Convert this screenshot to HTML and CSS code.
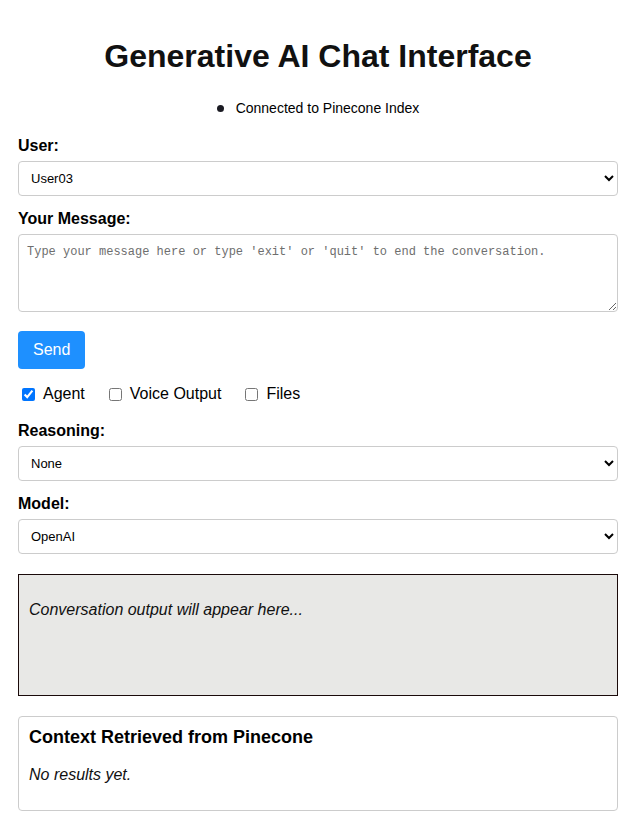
FILE: index.html
```html
<!DOCTYPE html>
<html lang="en">
<head>
<meta charset="utf-8">
<title>Generative AI Chat Interface</title>
<link rel="stylesheet" href="styles.css">
</head>
<body>
<div class="container">
  <h1 class="title">Generative AI Chat Interface</h1>
  <div class="status"><span class="dot"></span><span>Connected to Pinecone Index</span></div>

  <label class="field-label" for="user">User:</label>
  <select id="user" class="select"><option>User03</option></select>

  <label class="field-label" for="msg">Your Message:</label>
  <textarea id="msg" class="message" placeholder="Type your message here or type 'exit' or 'quit' to end the conversation."></textarea>

  <button class="send">Send</button>

  <div class="options">
    <label class="opt"><input type="checkbox" checked>Agent</label>
    <label class="opt"><input type="checkbox">Voice Output</label>
    <label class="opt"><input type="checkbox">Files</label>
  </div>

  <label class="field-label" for="reasoning">Reasoning:</label>
  <select id="reasoning" class="select"><option>None</option></select>

  <label class="field-label" for="model">Model:</label>
  <select id="model" class="select"><option>OpenAI</option></select>

  <div class="output"><p class="muted">Conversation output will appear here...</p></div>

  <div class="context">
    <h3 class="context-title">Context Retrieved from Pinecone</h3>
    <p class="muted">No results yet.</p>
  </div>
</div>
</body>
</html>
```
FILE: styles.css
```css
html, body {
  margin: 0;
  padding: 0;
  background: #fff;
}
body {
  font-family: "Liberation Sans", Arial, sans-serif;
  color: #000;
}
.container {
  width: 600px;
  margin: 0 18px;
  padding-top: 38px;
  display: flex;
  flex-direction: column;
}
.title {
  margin: 0;
  font-size: 32px;
  line-height: 37px;
  text-align: center;
  font-weight: bold;
  color: #111;
}
.status {
  margin-top: 25px;
  display: flex;
  justify-content: center;
  align-items: center;
  gap: 12px;
  font-size: 14px;
  line-height: 16px;
}
.dot {
  width: 7px;
  height: 7px;
  border-radius: 50%;
  background: #1a1a22;
}
.field-label {
  display: block;
  font-weight: bold;
  font-size: 16px;
  line-height: 20px;
  margin-top: 13px;
  margin-bottom: 5px;
}
.status + .field-label {
  margin-top: 20px;
}
.options + .field-label {
  margin-top: 18px;
}
.select {
  box-sizing: border-box;
  width: 600px;
  height: 35px;
  padding: 0 8px 0 8px;
  border: 1px solid #ccc;
  border-radius: 4px;
  background: #fff;
  font-family: "Liberation Sans", Arial, sans-serif;
  font-size: 13px;
  color: #000;
}
.message {
  box-sizing: border-box;
  width: 600px;
  height: 78px;
  padding: 10px 8px 8px;
  border: 1px solid #ccc;
  border-radius: 4px;
  font-family: "Liberation Mono", "DejaVu Sans Mono", monospace;
  font-size: 12px;
  line-height: 15px;
  margin: 0;
  display: block;
}
.message::placeholder {
  color: #6e6e6e;
}
.send {
  align-self: flex-start;
  margin-top: 19px;
  box-sizing: border-box;
  height: 38px;
  padding: 0 15px;
  border: none;
  border-radius: 4px;
  background: #1e90ff;
  color: #fff;
  font-family: "Liberation Sans", Arial, sans-serif;
  font-size: 16px;
}
.options {
  margin-top: 16px;
  display: flex;
  gap: 20px;
  font-size: 16px;
  line-height: 18px;
}
.opt {
  display: inline-flex;
  align-items: center;
}
.opt input {
  margin: 0 8px 0 4px;
  width: 13px;
  height: 13px;
}
.output {
  margin-top: 20px;
  min-height: 100px;
  padding: 10px;
  border: 1px solid #1a0a0a;
  background: #e8e8e6;
}
.muted {
  font-style: italic;
  font-size: 16px;
  line-height: 18px;
  margin: 16px 0;
  color: #111;
}
.context {
  margin-top: 20px;
  padding: 10px;
  border: 1px solid #ccc;
  border-radius: 4px;
}
.context-title {
  margin: 0 0 18px;
  font-size: 18px;
  line-height: 21px;
  font-weight: bold;
}
```
